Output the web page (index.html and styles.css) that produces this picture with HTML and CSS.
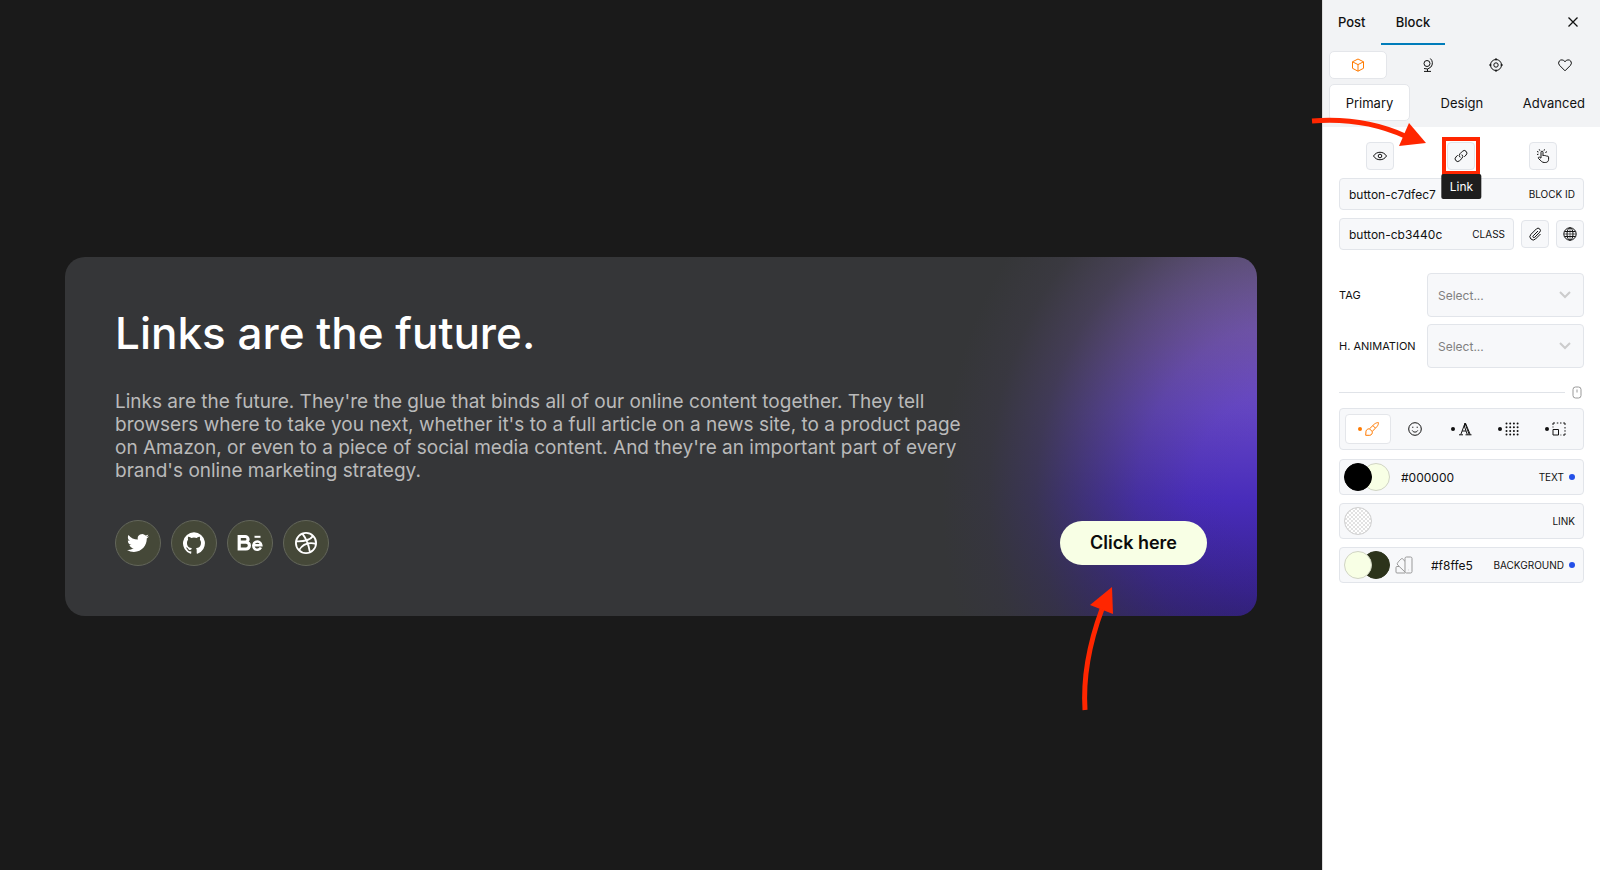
FILE: index.html
```html
<!DOCTYPE html>
<html lang="en">

<head>
    <meta charset="UTF-8">
    <meta name="viewport" content="width=device-width, initial-scale=1.0">
    <title>Block Editor</title>
    <link rel="stylesheet" href="styles.css">
</head>

<body>

    <main class="canvas">
        <section class="card">
            <h1>Links are the future.</h1>
            <p>Links are the future. They're the glue that binds all of our online content together. They tell browsers where to take you next, whether it's to a full article on a news site, to a product page on Amazon, or even to a piece of social media content. And they're an important part of every brand's online marketing strategy.</p>
            <div class="card-footer">
                <div class="socials">
                    <a href="#" aria-label="Twitter">
                        <svg width="22" height="22" viewBox="0 0 24 24" fill="currentColor"><path d="M23.95 4.57a10 10 0 0 1-2.82.77 4.96 4.96 0 0 0 2.16-2.72c-.95.56-2 .96-3.13 1.18a4.92 4.92 0 0 0-8.38 4.48A13.98 13.98 0 0 1 1.64 3.16a4.82 4.82 0 0 0-.67 2.48c0 1.7.87 3.2 2.19 4.1a4.9 4.9 0 0 1-2.23-.62v.06a4.92 4.92 0 0 0 3.95 4.83 5 5 0 0 1-2.21.08 4.94 4.94 0 0 0 4.6 3.42A9.87 9.87 0 0 1 0 19.54a13.99 13.99 0 0 0 7.55 2.21c9.05 0 14-7.5 14-13.98 0-.21 0-.42-.02-.63a9.94 9.94 0 0 0 2.42-2.57z"/></svg>
                    </a>
                    <a href="#" aria-label="GitHub">
                        <svg width="22" height="22" viewBox="0 0 24 24" fill="currentColor"><path d="M12 .3a12 12 0 0 0-3.8 23.38c.6.12.83-.26.83-.57L9 21.07c-3.34.72-4.04-1.61-4.04-1.61-.55-1.39-1.34-1.76-1.34-1.76-1.08-.74.09-.73.09-.73 1.2.09 1.83 1.24 1.83 1.24 1.08 1.83 2.81 1.3 3.5 1 .1-.78.42-1.31.76-1.61-2.67-.3-5.47-1.33-5.47-5.93 0-1.31.47-2.38 1.24-3.22-.14-.3-.54-1.52.1-3.18 0 0 1-.32 3.3 1.23a11.5 11.5 0 0 1 6 0c2.28-1.55 3.29-1.23 3.29-1.23.64 1.66.24 2.88.12 3.18a4.65 4.65 0 0 1 1.23 3.22c0 4.61-2.8 5.63-5.48 5.92.42.36.81 1.1.81 2.22l-.01 3.29c0 .31.2.69.82.57A12 12 0 0 0 12 .3"/></svg>
                    </a>
                    <a href="#" aria-label="Behance">
                        <svg width="26" height="18" viewBox="0 0 26 18" fill="none" stroke="currentColor" stroke-width="3.200"><path d="M2.200 2.500h6a2.600 2.600 0 0 1 0 5.700H3h6a3.300 3.300 0 0 1 0 6.800H2.200V2.500zM2.200 8.500v6" /><path d="M16 11.200h8.300a4 4.200 0 1 0-.4 2.300" stroke-width="2.500"/><path d="M17.500 2.800h6" stroke-width="2"/></svg>
                    </a>
                    <a href="#" aria-label="Dribbble">
                        <svg width="22" height="22" viewBox="0 0 24 24" fill="none" stroke="currentColor" stroke-width="2"><circle cx="12" cy="12" r="11"/><path d="M8 1.800c5.500 7 7.200 13.500 8.200 20M1.300 10.200c8 .3 15-1.200 18.500-6M4.500 19.800c4-7 10.500-8.800 18.300-7"/></svg>
                    </a>
                </div>
                <button class="cta" type="button">Click here</button>
            </div>
        </section>
    </main>

    <aside class="sidebar">
        <header class="panel-head">
            <nav class="top-tabs">
                <button type="button">Post</button>
                <button type="button" class="active">Block</button>
                <button type="button" class="close" aria-label="Close">
                    <svg width="10" height="10" viewBox="0 0 10 10" stroke="currentColor" stroke-width="1.300"><path d="M.5.5l9 9M9.500.5l-9 9"/></svg>
                </button>
            </nav>
            <div class="mode-tabs">
                <button type="button" class="active" aria-label="Block">
                    <svg class="icon" viewBox="0 0 14 14"><path d="M7 1l5.500 2.800v6.500L7 13.200l-5.500-2.900V3.800zM1.500 3.800L7 6.600l5.500-2.800M7 6.600v6.600"/></svg>
                </button>
                <button type="button" aria-label="Global">
                    <svg class="icon" viewBox="0 0 14 14"><circle cx="7" cy="5.500" r="3"/><path d="M10.300.5a6 6 0 0 1 .6 8.500A6 6 0 0 1 4 10.500M7.500 11v2.500M4 13.400h7"/></svg>
                </button>
                <button type="button" aria-label="Target">
                    <svg class="icon" viewBox="0 0 14 14"><circle cx="7" cy="7" r="5.500"/><circle cx="7" cy="7" r="2.200"/><path d="M7 0v2.500M7 11.500V14M0 7h2.500M11.500 7H14"/></svg>
                </button>
                <button type="button" aria-label="Favorites">
                    <svg class="icon" viewBox="0 0 14 14"><path d="M7 12.800L1.500 7.300A3.400 3.400 0 0 1 1.300 3C2.700 1.300 5.400 1.500 7 3.700 8.600 1.500 11.300 1.300 12.700 3a3.400 3.400 0 0 1-.2 4.300z"/></svg>
                </button>
            </div>
            <div class="section-tabs">
                <button type="button" class="active">Primary</button>
                <button type="button">Design</button>
                <button type="button">Advanced</button>
            </div>
        </header>

        <div class="panel-body">
            <div class="actions">
                <button type="button" class="icon-btn" aria-label="Visibility">
                    <svg class="icon" viewBox="0 0 14 14"><path d="M.5 7C3.500 2 10.500 2 13.500 7 10.500 12 3.500 12 .5 7z"/><circle cx="7" cy="7" r="1.800"/></svg>
                </button>
                <div class="link-action">
                    <button type="button" class="icon-btn" aria-describedby="link-tip" aria-label="Link">
                        <svg class="icon" viewBox="0 0 14 14"><path d="M6.200 8.400A2.600 2.600 0 0 1 6 4.700l2.400-2.400a2.600 2.600 0 0 1 3.700 3.700L10.300 7.800M7.800 5.600A2.600 2.600 0 0 1 8 9.300l-2.400 2.400A2.600 2.600 0 0 1 1.900 8l1.800-1.800"/></svg>
                    </button>
                    <span class="tooltip" id="link-tip" role="tooltip">Link</span>
                </div>
                <button type="button" class="icon-btn" aria-label="Interactions">
                    <svg class="icon" viewBox="0 0 14 14"><path d="M5 9V3.200a1 1 0 0 1 2 0V7c.3-.8 1.700-.8 2 0 .4-.6 1.700-.4 1.900.4.500-.5 1.700-.2 1.700.7v2.200c0 2-1.300 3.200-3.300 3.200H8.200C6 13.500 5 11.800 2.500 9.500c-.8-1 .5-1.900 1.300-1.200L5 9.300M1 2.500l1.500.5M1 5.500l1.500-.3M3.200.3l.7 1.400M8.500.3L8 1.700M9.300 3.500l1.700-.8"/></svg>
                </button>
            </div>

            <div class="field">
                <input type="text" id="blockId" value="button-c7dfec7">
                <label for="blockId">BLOCK ID</label>
            </div>

            <div class="class-row">
                <div class="field">
                    <input type="text" id="blockClass" value="button-cb3440c">
                    <label for="blockClass">CLASS</label>
                </div>
                <button type="button" class="icon-btn" aria-label="Attach">
                    <svg class="icon" viewBox="0 0 14 14"><path d="M10 4L5.200 8.800a1 1 0 0 0 1.500 1.500l5-5.100a2.300 2.300 0 0 0-3.300-3.300L2.900 7.400a3.200 3.200 0 0 0 4.600 4.600l5-5"/></svg>
                </button>
                <button type="button" class="icon-btn" aria-label="Global class">
                    <svg class="icon" viewBox="0 0 14 14"><circle cx="7" cy="7" r="6.200"/><ellipse cx="7" cy="7" rx="3" ry="6.200"/><path d="M1.500 4.500h11M1.500 9.500h11"/><path stroke-width=".6" d="M7 1v12M1 7h12"/></svg>
                </button>
            </div>

            <div class="selects">
                <label for="tag">TAG</label>
                <div class="select-box">
                    <select id="tag"><option>Select...</option></select>
                    <svg width="12" height="8" viewBox="0 0 12 8"><path d="M1 1l5 5 5-5"/></svg>
                </div>
                <label for="animation">H. ANIMATION</label>
                <div class="select-box">
                    <select id="animation"><option>Select...</option></select>
                    <svg width="12" height="8" viewBox="0 0 12 8"><path d="M1 1l5 5 5-5"/></svg>
                </div>
            </div>

            <div class="divider">
                <svg width="10" height="13" viewBox="0 0 10 13"><rect x="1" y="1" width="8" height="11" rx="2.500"/><path d="M5 3.500v3"/></svg>
            </div>

            <div class="toolbar">
                <button type="button" class="active" aria-label="Colors">
                    <i class="dot"></i>
                    <svg class="icon" viewBox="0 0 14 14"><path d="M4.500 6.800L9.500 2c1.200-1 3-1.500 3.900-1.400.2.900-.3 2.700-1.400 3.900L7.200 9.500zM4.500 6.800c-1.800 0-3.200.9-3.500 2.300L.7 13.300h4.100c1.800-.2 2.900-2 2.400-3.800M8 3.700L10.300 6"/></svg>
                </button>
                <button type="button" aria-label="Icon">
                    <svg class="icon" viewBox="0 0 14 14"><circle cx="7" cy="7" r="6.300"/><path d="M4.300 8.500c1 2.100 4.400 2.100 5.400 0M4.800 4.700v1.200M9.200 4.700v1.200"/></svg>
                </button>
                <button type="button" aria-label="Typography">
                    <i class="dot"></i>
                    <svg class="icon" viewBox="0 0 14 14"><path d="M1 12.800h4M7.500 12.800h6M2.800 12.500L7 1.200l4.200 11.300M7 1.200L6.300 4l3 8.500M4.200 9H8M7.500 1.200l4.700 11.300"/></svg>
                </button>
                <button type="button" aria-label="Grid">
                    <i class="dot"></i>
                    <svg class="icon dots" viewBox="0 0 14 14"><path d="M1.500 1.500h11.500M1.500 5.200h11.500M1.500 8.900h11.500M1.500 12.600h11.500"/></svg>
                </button>
                <button type="button" aria-label="Size">
                    <i class="dot"></i>
                    <svg class="icon" viewBox="0 0 14 14"><path d="M1 7.500h5.500V13H1zM1 5.500v-1M1 3V1h2M4.800 1h1.500M8 1h1.500M11.200 1H13v2M13 5v1.500M13 8.200v1.500M13 11.300V13h-2M9.300 13H8.500"/></svg>
                </button>
            </div>

            <div class="field color-field">
                <div class="swatches">
                    <button type="button" class="swatch black" aria-label="Text color"></button>
                    <button type="button" class="swatch cream" aria-label="Text hover color"></button>
                </div>
                <input type="text" id="textColor" value="#000000">
                <label for="textColor">TEXT</label>
                <i class="dot blue"></i>
            </div>

            <div class="field color-field">
                <div class="swatches">
                    <button type="button" class="swatch empty" aria-label="Link color"></button>
                </div>
                <input type="text" id="linkColor">
                <label for="linkColor">LINK</label>
            </div>

            <div class="field color-field">
                <div class="swatches">
                    <button type="button" class="swatch cream" aria-label="Background color"></button>
                    <button type="button" class="swatch olive" aria-label="Background hover color"></button>
                </div>
                <svg class="palette" width="18" height="18" viewBox="0 0 18 18"><rect x="10" y="1" width="7" height="16" rx="1.500"/><path d="M10 17H2a1 1 0 0 1-1-1v-4.500a1 1 0 0 1 1-1h2M10 16L3 9.300 2.200 8c-.4-.7 4-5.800 5-5.500L10 5.300M13.500 13.800v.4"/></svg>
                <input type="text" id="bgColor" value="#f8ffe5">
                <label for="bgColor">BACKGROUND</label>
                <i class="dot blue"></i>
            </div>
        </div>

        <!-- arrow to the link button -->
        <svg class="arrow arrow-link" width="118" height="34" viewBox="0 0 118 34"><path class="shaft" d="M1 5Q52 1 94 20"/><path class="tip" d="M98 7l17 20-27 3z"/></svg>
    </aside>

    <!-- arrow to the call to action -->
    <svg class="arrow arrow-cta" width="36" height="126" viewBox="0 0 36 126"><path class="shaft" d="M7 125Q4 78 24 24"/><path class="tip" d="M34 2L12 20l23 9z"/></svg>

</body>

</html>
```

FILE: styles.css
```css
* {
    box-sizing: border-box;
}

body {
    position: relative;
    display: flex;
    min-height: 100vh;
    margin: 0;
    font-family: Inter, "Liberation Sans", sans-serif;
    font-size: 12px;
    color: #111;
    background: #1a1a1a;
}

button,
input,
select {
    font: inherit;
    color: inherit;
    margin: 0;
    padding: 0;
    border: 0;
    background: none;
}

button {
    cursor: pointer;
}

svg {
    display: block;
    flex: none;
}

/* Canvas */
.canvas {
    flex: 1;
    display: flex;
    align-items: center;
    padding: 2px 65px 0;
}

.card {
    flex: 1;
    padding: 50px;
    border-radius: 20px;
    /* purple glow, hidden towards the left */
    background:
        radial-gradient(ellipse 340px 400px at 102% 66%, transparent 15%, rgba(53, 54, 56, 0.03) 26%, rgba(53, 54, 56, 0.2) 42%, rgba(53, 54, 56, 0.5) 58%, rgba(53, 54, 56, 0.78) 72%, rgba(53, 54, 56, 0.94) 86%, #353638 100%),
        linear-gradient(#8c6cc4, #7755bf 24%, #6546c4 42%, #482cba 68%, #321f80);
}

.card h1 {
    margin: 0 0 31px;
    font-size: 44px;
    line-height: 52px;
    font-weight: 500;
    color: #fff;
}

.card p {
    max-width: 860px;
    margin: 0;
    font-size: 19px;
    line-height: 23px;
    color: #bababa;
}

.card-footer {
    display: flex;
    justify-content: space-between;
    align-items: center;
    margin-top: 38px;
}

.socials {
    display: flex;
    gap: 10px;
}

.socials a {
    display: grid;
    place-items: center;
    width: 46px;
    height: 46px;
    border: 1px solid #63665a;
    border-radius: 50%;
    color: #fff;
    background: #454838;
}

.cta {
    height: 44px;
    padding: 0 30px;
    border-radius: 22px;
    font-size: 18px;
    font-weight: 600;
    color: #0b0b0b;
    background: #f8ffe5;
}

/* Sidebar */
.sidebar {
    position: relative;
    width: 278px;
    border-left: 1px solid #ddd;
    background: #fff;
}

.panel-head {
    height: 127px;
    padding: 0 6px;
    background: #f2f3f5;
}

.top-tabs {
    display: flex;
    height: 45px;
    font-size: 13px;
    font-weight: 500;
}

.top-tabs button {
    width: 64px;
    border-bottom: 2px solid transparent;
}

.top-tabs button:first-child {
    width: 52px;
    padding-left: 9px;
    text-align: left;
}

.top-tabs .active {
    border-color: #007cba;
}

.top-tabs .close {
    display: grid;
    place-items: center;
    width: 43px;
    margin-left: auto;
}

.mode-tabs {
    display: flex;
    justify-content: space-between;
    margin-top: 6px;
}

.mode-tabs button,
.section-tabs button {
    border: 1px solid transparent;
    border-radius: 5px;
}

.mode-tabs button {
    display: grid;
    place-items: center;
    width: 58px;
    height: 28px;
}

.mode-tabs .active,
.section-tabs .active {
    border-color: #e4e6ea;
    background: #fff;
}

.mode-tabs .active {
    color: #ff7a00;
}

.section-tabs {
    display: flex;
    justify-content: space-between;
    margin-top: 5px;
    font-size: 13px;
}

.section-tabs button {
    height: 37px;
    padding: 0 8px;
}

.section-tabs .active {
    width: 81px;
}

.icon {
    width: 14px;
    height: 14px;
    fill: none;
    stroke: currentColor;
    stroke-width: 1;
    stroke-linejoin: round;
}

.dots {
    stroke-width: 2;
    stroke-linecap: round;
    stroke-dasharray: 0 3.7;
}

.panel-body {
    display: flex;
    flex-direction: column;
    gap: 8px;
    padding: 15px 16px;
}

.actions {
    display: flex;
    justify-content: space-around;
}

.icon-btn {
    display: grid;
    flex: none;
    place-items: center;
    width: 28px;
    height: 28px;
    border: 1px solid #e2e5ea;
    border-radius: 4px;
    background: #f7f8fa;
}

.link-action {
    position: relative;
    outline: 4px solid #ff2600;
    outline-offset: 1px;
}

.tooltip {
    position: absolute;
    top: 32px;
    left: 50%;
    z-index: 1;
    padding: 0 8px;
    border-radius: 2px;
    line-height: 25px;
    color: #fff;
    background: #1e1e1e;
    transform: translateX(-50%);
}

.field {
    display: flex;
    align-items: center;
    height: 32px;
    padding: 0 8px 0 9px;
    border: 1px solid #e2e5ea;
    border-radius: 4px;
    background: #f7f8fa;
}

.field input {
    flex: 1;
    min-width: 0;
}

.field label {
    font-size: 10px;
}

.class-row {
    display: flex;
    align-items: center;
    gap: 7px;
}

.class-row .field {
    flex: 1;
    min-width: 0;
}

.selects {
    display: grid;
    grid-template-columns: 1fr 157px;
    gap: 7px 0;
    align-items: center;
    margin-top: 15px;
    font-size: 11px;
}

.select-box {
    display: grid;
    align-items: center;
    height: 44px;
    border: 1px solid #e2e5ea;
    border-radius: 4px;
    font-size: 12px;
    background: #f7f8fa;
}

.select-box select,
.select-box svg {
    grid-area: 1 / 1;
}

.select-box select {
    height: 100%;
    padding: 0 10px;
    color: #808080;
    appearance: none;
}

.select-box svg {
    justify-self: end;
    margin-right: 12px;
    fill: none;
    stroke: #ccc;
    stroke-width: 2;
    pointer-events: none;
}

.divider {
    display: flex;
    align-items: center;
    gap: 7px;
    margin: 10px 2px 1px 0;
}

.divider::before {
    content: "";
    flex: 1;
    border-top: 1px solid #e0e3e8;
}

.divider svg {
    fill: none;
    stroke: #999;
}

.toolbar {
    display: flex;
    justify-content: space-between;
    align-items: center;
    height: 42px;
    margin-bottom: 1px;
    padding: 0 5px;
    border: 1px solid #e2e5ea;
    border-radius: 4px;
    background: #f7f8fa;
}

.toolbar button {
    display: flex;
    justify-content: center;
    align-items: center;
    gap: 3px;
    width: 46px;
    height: 30px;
    border: 1px solid transparent;
    border-radius: 4px;
}

.toolbar .active {
    border-color: #e4e6ea;
    color: #ff7a00;
    background: #fff;
}

.dot {
    width: 4px;
    height: 4px;
    border-radius: 50%;
    background: currentColor;
}

.dot.blue {
    width: 6px;
    height: 6px;
    margin-left: 5px;
    background: #2450e8;
}

.color-field {
    height: 36px;
    padding-left: 4px;
}

.swatches {
    display: flex;
    margin-right: 11px;
}

.swatch {
    width: 28px;
    height: 28px;
    border: 1px solid #d0d4c4;
    border-radius: 50%;
}

.swatch:first-child {
    z-index: 1;
}

.swatch + .swatch {
    margin-left: -10px;
}

.black {
    border-color: #000;
    background: #000;
}

.cream {
    background: #f8ffe5;
}

.olive {
    border-color: #2c331b;
    background: #2c331b;
}

.empty {
    border-color: #d0d0d0;
    background: repeating-conic-gradient(#e2e2e2 0 25%, #fff 0 50%) 0 0 / 4px 4px;
}

.palette {
    margin: 0 18px 0 -6px;
    fill: none;
    stroke: #999;
}

/* Arrows */
.arrow {
    position: absolute;
    z-index: 2;
    pointer-events: none;
}

.arrow .shaft {
    fill: none;
    stroke: #ff2600;
    stroke-width: 5;
}

.arrow .tip {
    fill: #ff2600;
}

.arrow-link {
    top: 116px;
    left: -12px;
}

.arrow-cta {
    top: 585px;
    left: 1078px;
}
```
